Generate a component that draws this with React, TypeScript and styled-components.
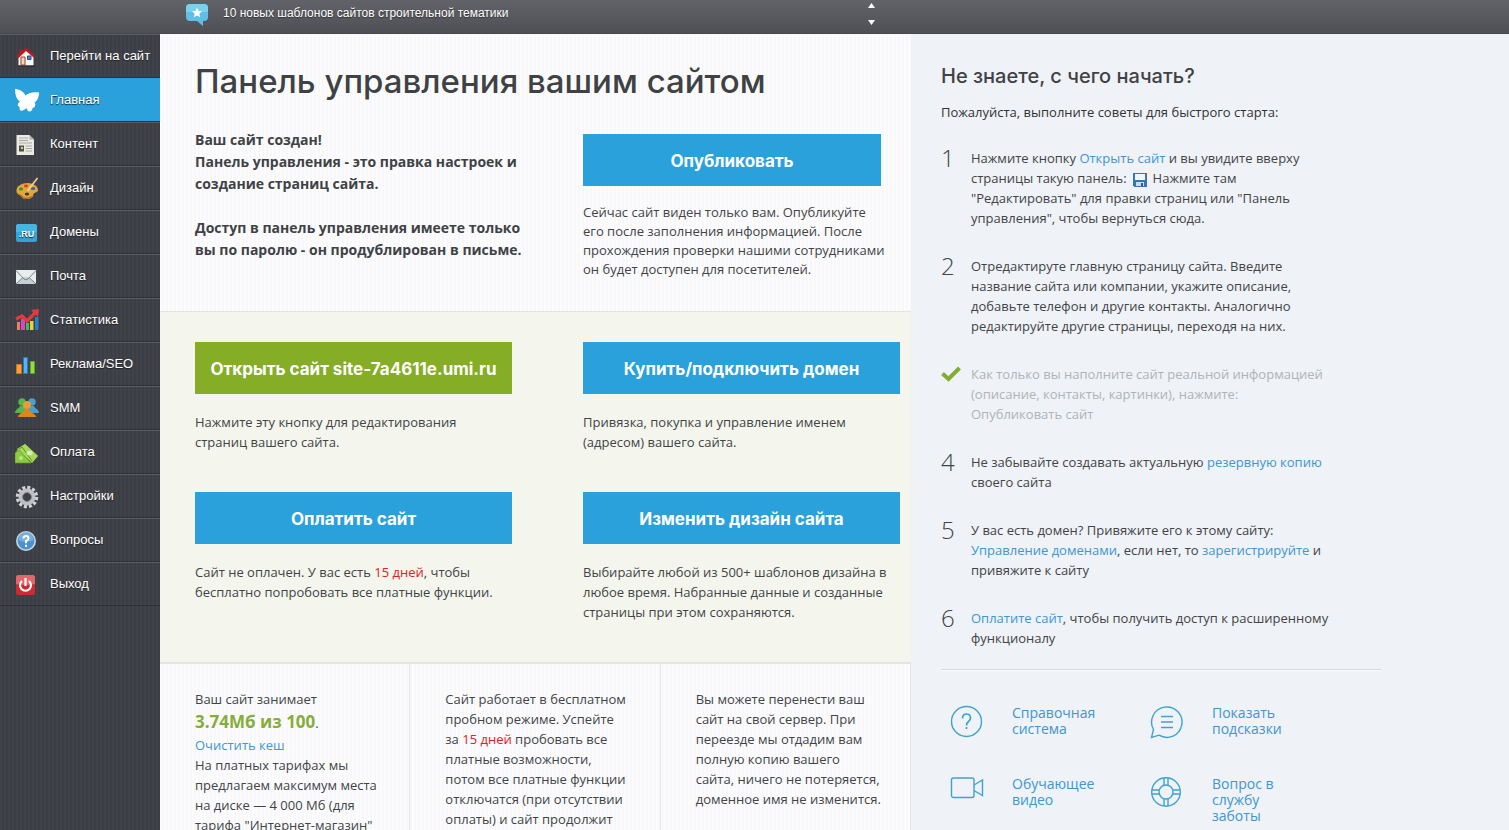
import React from "react";
import styled, { createGlobalStyle } from "styled-components";

const GlobalStyle = createGlobalStyle`
  *, *::before, *::after { box-sizing: border-box; }
  html, body, #root { height: 100%; }
  body {
    margin: 0;
    font-family: "Open Sans", Inter, sans-serif;
    font-size: 13px;
    line-height: 20px;
    color: #414447;
    background: #eff2f6;
  }
  p, h1, h2, ul, ol { margin: 0; padding: 0; }
  ul, ol { list-style: none; }
  a { text-decoration: none; }
`;

const Shell = styled.div`
  height: 100%;
  display: flex;
  flex-direction: column;
  overflow: hidden;
`;

const TopBar = styled.header`
  flex: 0 0 34px;
  display: flex;
  align-items: flex-start;
  padding-left: 185px;
  background: linear-gradient(#626368, #4f5055);
  border-bottom: 1px solid #48494e;
`;

const NewsLink = styled.a`
  width: 682px;
  display: flex;
  gap: 14px;
  padding-top: 3px;
  color: #fff;
  font-family: "Liberation Sans", sans-serif;
  font-size: 12px;
  text-shadow: 0 1px 1px #333;
`;

const NewsControls = styled.div`
  display: flex;
  flex-direction: column;
  gap: 12px;
  padding-top: 3px;
`;

const ArrowButton = styled.button`
  display: block;
  width: 9px;
  height: 5px;
  padding: 0;
  border: 0;
  background: none;
  svg { display: block; }
`;

const Body = styled.div`
  flex: 1;
  min-height: 0;
  display: grid;
  grid-template-columns: 160px minmax(751px, 5fr) minmax(0, 4fr);
`;

const Sidebar = styled.nav`
  background: repeating-linear-gradient(90deg, #41434b 0 2px, #3c3e46 2px 4px);
`;

const NavLink = styled.a<{ $active?: boolean }>`
  display: flex;
  align-items: center;
  gap: 11px;
  height: 44px;
  padding-left: 15px;
  color: #fff;
  font-family: "Liberation Sans", sans-serif;
  font-size: 13px;
  text-shadow: 0 1px 1px #222;
  border-top: 1px solid ${(p) => (p.$active ? "#2aa1db" : "#5a5c64")};
  border-bottom: 1px solid #2f3138;
  background: ${(p) => (p.$active ? "#2aa1db" : "none")};
  svg { flex: none; margin-top: 1px; }
  span { white-space: nowrap; padding-bottom: 1px; }
`;

const Main = styled.main`
  min-width: 0;
  overflow: hidden;
  background: repeating-linear-gradient(90deg, #fcfcfd 0 2px, #f8f8fa 2px 4px);
`;

const Intro = styled.section`
  height: 277px;
  padding: 28px 30px 0 35px;
`;

const Title = styled.h1`
  font-family: Inter, sans-serif;
  font-size: 33px;
  line-height: 38px;
  font-weight: 500;
  color: #3f4245;
  white-space: nowrap;
`;

const IntroColumns = styled.div`
  display: grid;
  grid-template-columns: 353px minmax(0, 1fr);
  column-gap: 35px;
  padding-top: 29px;
`;

const IntroText = styled.p`
  font-size: 14px;
  line-height: 22px;
  font-weight: 700;
  color: #3f4245;
  white-space: nowrap;
`;

const Publish = styled.div`
  padding-top: 5px;
`;

const PublishText = styled.p`
  line-height: 19px;
  padding-top: 17px;
  white-space: nowrap;
`;

const Action = styled.button<{ $green?: boolean }>`
  display: block;
  width: 100%;
  height: 52px;
  padding: 1px 0 0;
  border: 0;
  color: #fff;
  background: ${(p) => (p.$green ? "#86ad26" : "#2aa1db")};
  font-family: Inter, sans-serif;
  font-size: 17px;
  font-weight: 700;
  white-space: nowrap;
`;

const Actions = styled.section`
  display: grid;
  grid-template-columns: 1fr 1fr;
  gap: 40px 71px;
  padding: 30px 11px 40px 35px;
  background: #f4f6ed;
  border-top: 1px solid #e3e5e0;
  border-bottom: 2px solid #e3e5e3;
`;

const ActionText = styled.p`
  padding-top: 18px;
  white-space: nowrap;
`;

const Facts = styled.section`
  display: grid;
  grid-template-columns: repeat(3, 1fr);
  height: 100%;
`;

const Fact = styled.div`
  padding: 25px 0 0 35px;
  white-space: nowrap;
  border-right: 1px solid #e2e3e5;
`;

const Quota = styled.span`
  display: block;
  padding-top: 2px;
  line-height: 24px;
  b { font-size: 17px; line-height: 20px; color: #86ad3a; }
`;

const Warn = styled.span`
  color: #e02020;
`;

const Link = styled.a`
  color: #4096d2;
`;

const Aside = styled.aside`
  min-width: 0;
  padding: 30px 30px 0 30px;
  background: #eff2f6;
`;

const AsideTitle = styled.h2`
  font-family: Inter, sans-serif;
  font-size: 20px;
  line-height: 24px;
  font-weight: 500;
  color: #3f4245;
`;

const AsideLead = styled.p`
  padding-top: 14px;
  color: #303336;
`;

const Steps = styled.ol`
  display: grid;
  gap: 28px;
  padding-top: 26px;
`;

const Step = styled.li<{ $done?: boolean }>`
  display: grid;
  grid-template-columns: 30px 1fr;
  color: ${(p) => (p.$done ? "#b0b4b8" : "inherit")};
  white-space: nowrap;
`;

const StepMark = styled.span`
  font-size: 24px;
  font-weight: 300;
`;

const Disk = styled.svg`
  margin: 0 6px 0 6px;
  vertical-align: -4px;
`;

const Divider = styled.hr`
  width: 440px;
  max-width: 100%;
  height: 2px;
  margin: 21px 0 34px;
  border: 0;
  border-top: 1px solid #d5d7dc;
  border-bottom: 1px solid #fff;
`;

const HelpGrid = styled.ul`
  display: grid;
  grid-template-columns: 200px 200px;
  row-gap: 23px;
  padding-left: 9px;
`;

const HelpLink = styled.a`
  display: grid;
  grid-template-columns: 62px 1fr;
  min-height: 48px;
  font-size: 14px;
  line-height: 16px;
  color: #4096d2;
`;

const HelpIcon = styled.svg`
  fill: none;
  stroke: #40a3cf;
  stroke-width: 1.4;
`;

function Icon({ children }: { children: React.ReactNode }) {
  return (
    <svg width="24" height="24" viewBox="0 0 24 24" aria-hidden="true">
      {children}
    </svg>
  );
}

const icons: Record<string, React.ReactNode> = {
  home: (
    <>
      <path d="M3.500 10 11 4l7.500 6v10.500h-15z" fill="#fbf9f3" />
      <path d="M1.500 11.500 4.500 8V5h3v1L11 2.500l9 8.500-1.500 1.500L11 6l-7.500 7z" fill="#c4161c" />
      <path d="M6 12h4v8H6z" fill="#f4d5b4" stroke="#9a4030" />
      <path d="M12.500 11h3.500v3.500h-3.500z" fill="#5480c4" stroke="#294e8b" />
      <path d="M2.500 21h17" stroke="#222" />
    </>
  ),
  butterfly: (
    <path d="M0 0c4-.2 9 3 10.500 6.500C13 4 18 2.500 24 3.500c.3 3-1.500 8.500-4.500 10 2 2 0 5.500-2 5.500 0 3-3 4.500-5 2.500l-1-2.500c-2 1.500-4 3.500-6 2.500-1.500-.8-.5-2.500-1-3.500-2.500-1-2-4 .5-5.500C2 11 0 6 0 0z" fill="#fff" />
  ),
  content: (
    <>
      <path d="M1.500 2h13l4.500 4.500V22h-17.500z" fill="#eceae5" />
      <path d="M14.500 2v4.500H19z" fill="#b3b1ac" />
      <path d="M4 5h9M4 7.500h9M4 10h13M10.500 13h6.500M10.500 15.500h6.500M10.500 18h6.500" stroke="#aaa9a5" />
      <path d="M4 12.500h5v6H4z" fill="#46523a" />
      <circle cx="7" cy="15" r="1.300" fill="#d9c27b" />
    </>
  ),
  design: (
    <>
      <path d="M1.500 14C1 9 7 6 12.500 6S23 9 23 13c0 3-4 2-4.500 4 0 4-4.500 5.500-8.500 5-3-.3-3.500-3-5.500-4C2.500 17 1.500 16 1.500 14z" fill="#e4a53b" />
      <path d="M1.500 14c1 4 5 3 6 5s6 2.500 10.500-1c-1 3-4.500 4.500-8 4-3-.3-3.500-3-5.500-4s-3-2-3-4z" fill="#b56e20" />
      <ellipse cx="6" cy="12" rx="2" ry="1.500" fill="#3d8b3d" />
      <ellipse cx="11" cy="9" rx="2" ry="1.400" fill="#d0402b" />
      <ellipse cx="18" cy="11.500" rx="2.300" ry="1.500" fill="#3565a8" />
      <ellipse cx="12" cy="17" rx="2.200" ry="1.500" fill="#3c3c40" />
      <path d="M12.500 14 22.500 1" stroke="#f5d28c" strokeWidth="1.600" />
    </>
  ),
  domain: (
    <>
      <rect x="1" y="3" width="21" height="18" rx="2.500" fill="#30a5da" />
      <path d="M3.500 3h16A2.500 2.500 0 0 1 22 5.500V11H1V5.500A2.500 2.500 0 0 1 3.500 3z" fill="#45b6e3" />
      <text x="11.500" y="16" textAnchor="middle" fontFamily="Liberation Sans" fontSize="9" fontWeight="700" fill="#fff">.RU</text>
    </>
  ),
  mail: (
    <>
      <path d="M1 5h20v14H1z" fill="#e8eeee" />
      <path d="m1 19 7.500-7h5l7.500 7z" fill="#c4d2d3" />
      <path d="m1 5.500 8 8.500q2 1.600 4 0l8-8.500M1 19l7-6.500M21 19l-7-6.500" fill="none" stroke="#72868a" />
    </>
  ),
  stats: (
    <>
      <path d="M2 13h3v8H2z" fill="#e88060" />
      <path d="M6 10h4v11H6z" fill="#d14bc0" />
      <path d="M11 14h3v7h-3z" fill="#48b851" />
      <path d="M15 12h3.500v9H15z" fill="#e2d33d" />
      <path d="M20 8h3.500v13H20z" fill="#277fc4" />
      <path d="m1 10 6-3 5 5 8-8" fill="none" stroke="#e33b3d" strokeWidth="3.200" />
      <path d="m16 1 8-1-1 8z" fill="#e33b3d" />
    </>
  ),
  bars: (
    <>
      <path d="M1.500 11.500h5v9h-5z" fill="#f4a33a" stroke="#cf7517" />
      <path d="M8.500 4.500h4v16h-4z" fill="#5bb2ec" stroke="#267bb9" />
      <path d="M15.500 8.500h4v12h-4z" fill="#94db42" stroke="#5fa31f" />
    </>
  ),
  people: (
    <>
      <circle cx="7" cy="5" r="3.700" fill="#51b848" />
      <path d="M0 16c0-4 4-4 5-7h5l2 7z" fill="#51b848" />
      <circle cx="17" cy="5" r="3.700" fill="#4b9fca" />
      <path d="M24 16c0-4-4-4-5-7h-5l-2 7z" fill="#4b9fca" />
      <circle cx="12" cy="8" r="4" fill="#e99c38" />
      <path d="M3 20c0-4 6-3.500 7-8h4c1 4.500 7 4 7 8z" fill="#dd861c" />
    </>
  ),
  money: (
    <>
      <path d="m1 10 9-7 13 12-7 5z" fill="#79b83c" />
      <path d="m2 8 8-5 13 12-6 7z" fill="#a7d85a" />
      <path d="m0 12 4-3 12 13H0z" fill="#8bcb43" stroke="#5c972e" strokeWidth=".7" />
      <path d="m4 8 3-2 10 14" fill="none" stroke="#5c972e" />
      <ellipse cx="14.500" cy="12" rx="3" ry="2.300" fill="#d5efb3" />
      <circle cx="6" cy="17" r="2" fill="#b8e680" />
    </>
  ),
  gear: (
    <>
      <circle cx="12" cy="12" r="9.500" fill="none" stroke="#d2d3d5" strokeWidth="3.500" strokeDasharray="3 1.970" />
      <circle cx="12" cy="12" r="6.400" fill="none" stroke="#bfc0c3" strokeWidth="4.200" />
      <circle cx="12" cy="12" r="4.500" fill="none" stroke="#85878b" />
    </>
  ),
  question: (
    <>
      <circle cx="11" cy="12" r="9.200" fill="#4a91d2" stroke="#c9d3dc" strokeWidth="1.600" />
      <path d="M3.500 11a7.500 7.500 0 0 1 15 0q-7.500 4-15 0z" fill="#76aee0" />
      <path d="M8.500 9.500q0-2.500 2.500-2.500t2.500 2.300Q13.500 11 11 12v2.300M11 15.800V18" fill="none" stroke="#fff" strokeWidth="2" />
    </>
  ),
  power: (
    <>
      <rect x="1" y="2" width="19" height="20" rx="2.500" fill="#cf2a2e" />
      <path d="M3.500 2h14A2.500 2.500 0 0 1 20 4.500V11q-9 2-19 0V4.500A2.500 2.500 0 0 1 3.500 2z" fill="#e1686a" />
      <path d="M7 8a5.500 5.500 0 1 0 7 0M10.500 5v8" fill="none" stroke="#fff" strokeWidth="2.200" />
    </>
  ),
};

const navItems = [
  ["home", "Перейти на сайт"],
  ["butterfly", "Главная"],
  ["content", "Контент"],
  ["design", "Дизайн"],
  ["domain", "Домены"],
  ["mail", "Почта"],
  ["stats", "Статистика"],
  ["bars", "Реклама/SEO"],
  ["people", "SMM"],
  ["money", "Оплата"],
  ["gear", "Настройки"],
  ["question", "Вопросы"],
  ["power", "Выход"],
];

export default function App() {
  return (
    <Shell>
      <GlobalStyle />
      <TopBar>
        <NewsLink href="#news">
          <Icon>
            <path d="M5 1h14q4 0 4 4v9q0 4-4 4l-1 0 0 5-6-5H5q-4 0-4-4V5q0-4 4-4z" fill="#5fbfe6" />
            <path d="M5 1h14q4 0 4 4v4H1V5q0-4 4-4z" fill="#7bd0ee" />
            <path d="m12 4.500 1.500 3.500 3.500.3-2.700 2.400.9 3.600L12 12.400l-3.200 1.900.9-3.600L7 8.300l3.500-.3z" fill="#fff" />
          </Icon>
          <span>10 новых шаблонов сайтов строительной тематики</span>
        </NewsLink>
        <NewsControls>
          <ArrowButton aria-label="Предыдущая новость">
            <svg width="9" height="5"><path d="M1 5h7L4.500 0z" fill="#fff" /></svg>
          </ArrowButton>
          <ArrowButton aria-label="Следующая новость">
            <svg width="9" height="5"><path d="M1 0h7L4.500 5z" fill="#fff" /></svg>
          </ArrowButton>
        </NewsControls>
      </TopBar>
      <Body>
        <Sidebar>
          {navItems.map(([icon, label]) => (
            <NavLink key={icon} href={`#${icon}`} $active={icon === "butterfly"}>
              <Icon>{icons[icon]}</Icon>
              <span>{label}</span>
            </NavLink>
          ))}
        </Sidebar>
        <Main>
          <Intro>
            <Title>Панель управления вашим сайтом</Title>
            <IntroColumns>
              <IntroText>
                Ваш сайт создан!<br />
                Панель управления - это правка настроек и<br />
                создание страниц сайта.<br />
                <br />
                Доступ в панель управления имеете только<br />
                вы по паролю - он продублирован в письме.
              </IntroText>
              <Publish>
                <Action>Опубликовать</Action>
                <PublishText>
                  Сейчас сайт виден только вам. Опубликуйте<br />
                  его после заполнения информацией. После<br />
                  прохождения проверки нашими сотрудниками<br />
                  он будет доступен для посетителей.
                </PublishText>
              </Publish>
            </IntroColumns>
          </Intro>
          <Actions>
            <div>
              <Action $green>Открыть сайт site-7a4611e.umi.ru</Action>
              <ActionText>
                Нажмите эту кнопку для редактирования<br />
                страниц вашего сайта.
              </ActionText>
            </div>
            <div>
              <Action>Купить/подключить домен</Action>
              <ActionText>
                Привязка, покупка и управление именем<br />
                (адресом) вашего сайта.
              </ActionText>
            </div>
            <div>
              <Action>Оплатить сайт</Action>
              <ActionText>
                Сайт не оплачен. У вас есть <Warn>15 дней</Warn>, чтобы<br />
                бесплатно попробовать все платные функции.
              </ActionText>
            </div>
            <div>
              <Action>Изменить дизайн сайта</Action>
              <ActionText>
                Выбирайте любой из 500+ шаблонов дизайна в<br />
                любое время. Набранные данные и созданные<br />
                страницы при этом сохраняются.
              </ActionText>
            </div>
          </Actions>
          <Facts>
            <Fact>
              Ваш сайт занимает
              <Quota><b>3.74Мб из 100</b>.</Quota>
              <Link href="#cache">Очистить кеш</Link><br />
              На платных тарифах мы<br />
              предлагаем максимум места<br />
              на диске — 4 000 Мб (для<br />
              тарифа "Интернет-магазин"
            </Fact>
            <Fact>
              Сайт работает в бесплатном<br />
              пробном режиме. Успейте<br />
              за <Warn>15 дней</Warn> пробовать все<br />
              платные возможности,<br />
              потом все платные функции<br />
              отключатся (при отсутствии<br />
              оплаты) и сайт продолжит
            </Fact>
            <Fact>
              Вы можете перенести ваш<br />
              сайт на свой сервер. При<br />
              переезде мы отдадим вам<br />
              полную копию вашего<br />
              сайта, ничего не потеряется,<br />
              доменное имя не изменится.
            </Fact>
          </Facts>
        </Main>
        <Aside>
          <AsideTitle>Не знаете, с чего начать?</AsideTitle>
          <AsideLead>Пожалуйста, выполните советы для быстрого старта:</AsideLead>
          <Steps>
            <Step>
              <StepMark>1</StepMark>
              <p>
                Нажмите кнопку <Link href="#open">Открыть сайт</Link> и вы увидите вверху<br />
                страницы такую панель:
                <Disk width="14" height="14" viewBox="0 0 14 14" aria-hidden="true">
                  <path d="M0 0h14v14H1.500L0 12.500z" fill="#3577ae" />
                  <path d="M2 1h10v6H2z" fill="#eef6fb" />
                  <path d="M3 9h8v4H3z" fill="#c9dcea" />
                  <path d="M8 10h2v3H8z" fill="#285f91" />
                </Disk>
                Нажмите там<br />
                "Редактировать" для правки страниц или "Панель<br />
                управления", чтобы вернуться сюда.
              </p>
            </Step>
            <Step>
              <StepMark>2</StepMark>
              <p>
                Отредактируте главную страницу сайта. Введите<br />
                название сайта или компании, укажите описание,<br />
                добавьте телефон и другие контакты. Аналогично<br />
                редактируйте другие страницы, переходя на них.
              </p>
            </Step>
            <Step $done>
              <StepMark>
                <svg width="20" height="18" viewBox="0 0 20 18" aria-hidden="true">
                  <path d="m1.500 8.500 6 5.500L18.500 3" fill="none" stroke="#82ad33" strokeWidth="4" />
                </svg>
              </StepMark>
              <p>
                Как только вы наполните сайт реальной информацией<br />
                (описание, контакты, картинки), нажмите:<br />
                Опубликовать сайт
              </p>
            </Step>
            <Step>
              <StepMark>4</StepMark>
              <p>
                Не забывайте создавать актуальную <Link href="#backup">резервную копию</Link><br />
                своего сайта
              </p>
            </Step>
            <Step>
              <StepMark>5</StepMark>
              <p>
                У вас есть домен? Привяжите его к этому сайту:<br />
                <Link href="#domains">Управление доменами</Link>, если нет, то <Link href="#register">зарегистрируйте</Link> и<br />
                привяжите к сайту
              </p>
            </Step>
            <Step>
              <StepMark>6</StepMark>
              <p>
                <Link href="#pay">Оплатите сайт</Link>, чтобы получить доступ к расширенному<br />
                функционалу
              </p>
            </Step>
          </Steps>
          <Divider />
          <HelpGrid>
            <li>
              <HelpLink href="#help">
                <HelpIcon width="34" height="34" viewBox="0 0 34 34">
                  <circle cx="16.500" cy="16.500" r="15" />
                  <path d="M12.500 13.500q0-4.500 4-4.500t4 4q0 2-2 3.500t-2 4M16.500 22v2" strokeWidth="1.700" />
                </HelpIcon>
                <span>Справочная<br />система</span>
              </HelpLink>
            </li>
            <li>
              <HelpLink href="#hints">
                <HelpIcon width="34" height="34" viewBox="0 0 34 34">
                  <path d="M3.500 24.500A15.200 15.200 0 1 1 9 30.200L1.500 32.500z" />
                  <path d="M11 11.500h12M11 17h12M11 22.500h12" />
                </HelpIcon>
                <span>Показать<br />подсказки</span>
              </HelpLink>
            </li>
            <li>
              <HelpLink href="#video">
                <HelpIcon width="34" height="34" viewBox="0 0 34 34">
                  <rect x="1.500" y="2" width="22.500" height="19.500" rx="2" />
                  <path d="m24 9 8.500-5v15.500L24 14.500" />
                </HelpIcon>
                <span>Обучающее<br />видео</span>
              </HelpLink>
            </li>
            <li>
              <HelpLink href="#support">
                <HelpIcon width="34" height="34" viewBox="0 0 34 34">
                  <circle cx="16" cy="16" r="14.300" />
                  <circle cx="16" cy="16" r="7" />
                  <path d="M14 2v7.500M18 2v7.500M14 22.500V30M18 22.500V30M2 14h7.500M2 18h7.500M22.500 14H30M22.500 18H30" />
                </HelpIcon>
                <span>Вопрос в<br />службу<br />заботы</span>
              </HelpLink>
            </li>
          </HelpGrid>
        </Aside>
      </Body>
    </Shell>
  );
}
